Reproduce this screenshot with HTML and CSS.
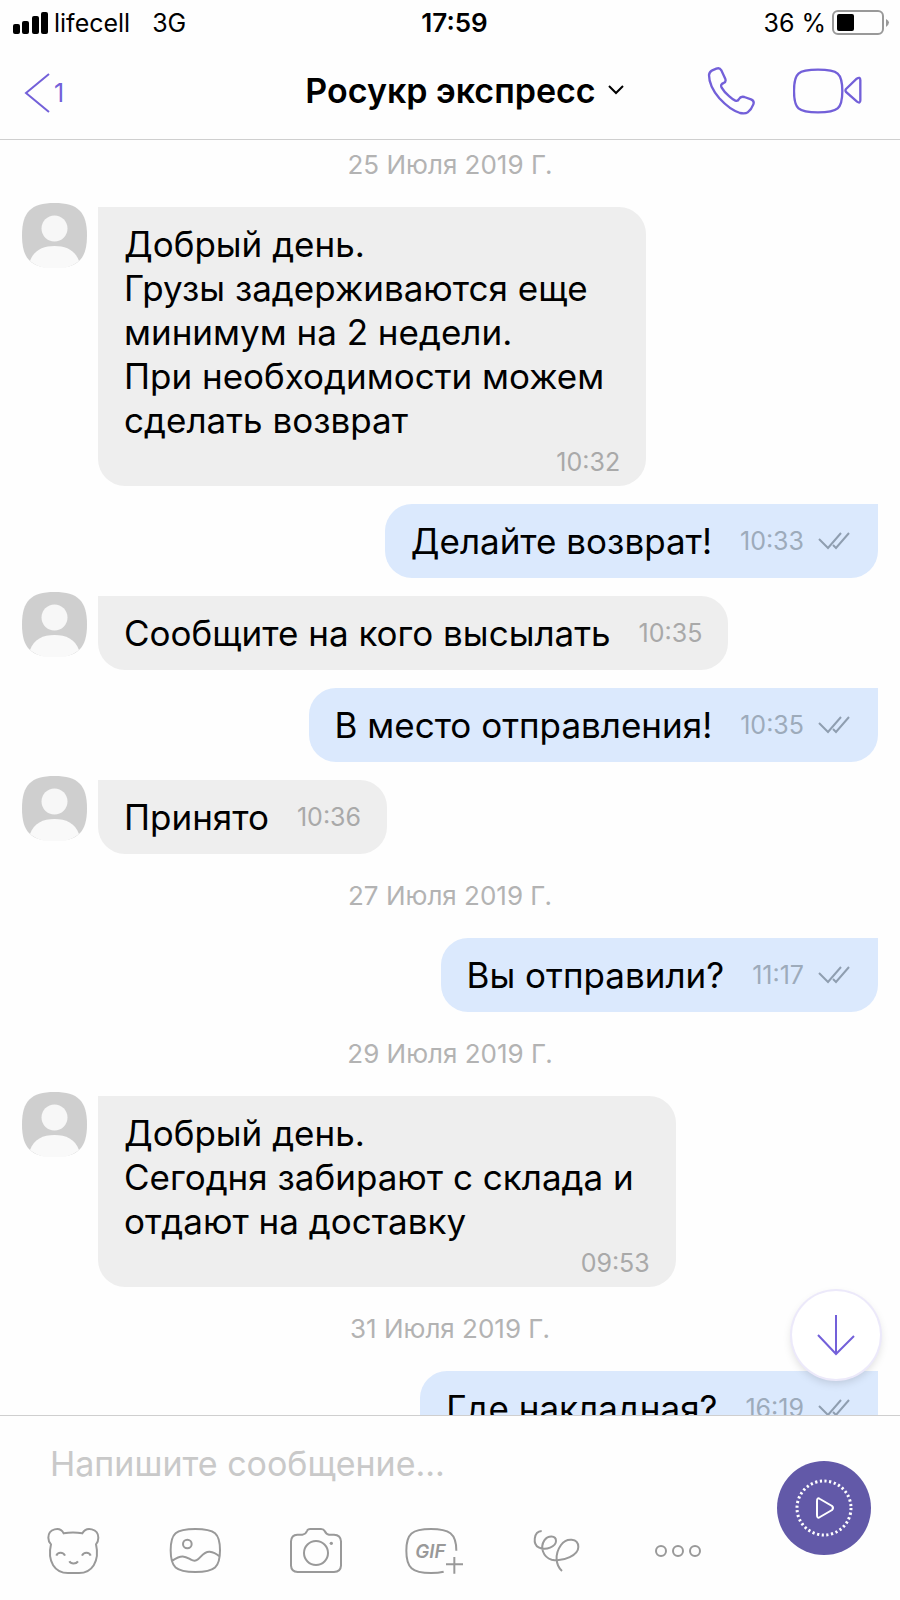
FILE: index.html
```html
<!DOCTYPE html>
<html lang="ru">
<head>
    <meta charset="UTF-8">
    <meta name="viewport" content="width=device-width, initial-scale=1.0">
    <title>Росукр экспресс</title>
    <link rel="stylesheet" href="styles.css">
</head>
<body>
    <svg class="sprite" aria-hidden="true">
        <symbol id="avatar" viewBox="0 0 65 65">
            <path d="M32.500 0C56 0 65 9 65 32.500S56 65 32.500 65 0 56 0 32.500 9 0 32.500 0Z" fill="#cfcfcf"/>
            <circle cx="32.500" cy="25.500" r="13" fill="#f7f7f7"/>
            <path d="M8 58C12 47 21 43 32.500 43S53 47 57 58C51 63 43 66 32.500 66S14 63 8 58Z" fill="#f9f9f9"/>
        </symbol>
        <symbol id="ticks" viewBox="0 0 32 18">
            <path d="M1 7L10 16 23 1M15 13L18 16 31 1" fill="none" stroke="currentColor" stroke-width="2"/>
        </symbol>
    </svg>

    <div class="status">
        <div class="status-left">
            <svg width="35" height="22" viewBox="0 0 35 22"><rect y="12" width="7" height="10" rx="2"/><rect x="9" y="9" width="7" height="13" rx="2"/><rect x="19" y="4" width="7" height="18" rx="2"/><rect x="28" width="7" height="22" rx="2"/></svg>
            <span>lifecell</span>
            <span class="network">3G</span>
        </div>
        <time class="clock">17:59</time>
        <div class="status-right">
            <span>36 %</span>
            <svg width="58" height="26" viewBox="0 0 58 26"><rect x="1" y="1" width="50" height="23" rx="5" fill="none" stroke="#999" stroke-width="2"/><rect x="5" y="4" width="17" height="17" rx="2"/><path d="M54 9Q60 12 54 17Z" fill="#999"/></svg>
        </div>
    </div>

    <header class="header">
        <button class="back" aria-label="Назад"><svg width="26" height="42" viewBox="0 0 26 42"><path d="M25 2L2 21 25 40" fill="none" stroke="currentColor" stroke-width="2"/></svg><span>1</span></button>
        <button class="title">Росукр экспресс<svg width="16" height="10" viewBox="0 0 16 10"><path d="M1 1L8 8 15 1" fill="none" stroke="#000" stroke-width="2"/></svg></button>
        <div class="calls">
            <button aria-label="Позвонить"><svg width="50" height="50" viewBox="773 194 150 150"><path d="M779 224Q780 215 789 210L801 205Q811 201 816 210L828 236Q831 245 823 248 812 251 817 262 824 275 840 288 850 297 858 301 866 303 869 296 874 287 885 290L905 297Q916 302 912 312 906 328 895 336 888 341 872 338 842 329 810 294 779 257 779 224Z"/></svg></button>
            <button aria-label="Видеозвонок"><svg width="70" height="50" viewBox="1031 194 210 150"><path d="M1106 208C1166 208 1179 218 1179 272S1166 336 1106 336 1034 326 1034 272 1046 208 1106 208ZM1190 266L1222 235Q1233 228 1233 240V300Q1233 311 1223 304L1190 275Q1187 270 1190 266Z"/></svg></button>
        </div>
    </header>

    <main class="chat">
        <div class="messages">
            <p class="date">25 Июля 2019 Г.</p>
            <div class="row">
                <svg class="avatar"><use href="#avatar"/></svg>
                <div class="bubble long">
                    <p>Добрый день.<br>Грузы задерживаются еще<br>минимум на 2 недели.<br>При необходимости можем<br>сделать возврат</p>
                    <time>10:32</time>
                </div>
            </div>
            <div class="row out">
                <div class="bubble"><p>Делайте возврат!</p><time>10:33</time><svg class="ticks"><use href="#ticks"/></svg></div>
            </div>
            <div class="row">
                <svg class="avatar"><use href="#avatar"/></svg>
                <div class="bubble"><p>Сообщите на кого высылать</p><time>10:35</time></div>
            </div>
            <div class="row out">
                <div class="bubble"><p>В место отправления!</p><time>10:35</time><svg class="ticks"><use href="#ticks"/></svg></div>
            </div>
            <div class="row">
                <svg class="avatar"><use href="#avatar"/></svg>
                <div class="bubble"><p>Принято</p><time>10:36</time></div>
            </div>
            <p class="date">27 Июля 2019 Г.</p>
            <div class="row out">
                <div class="bubble"><p>Вы отправили?</p><time>11:17</time><svg class="ticks"><use href="#ticks"/></svg></div>
            </div>
            <p class="date">29 Июля 2019 Г.</p>
            <div class="row">
                <svg class="avatar"><use href="#avatar"/></svg>
                <div class="bubble long">
                    <p>Добрый день.<br>Сегодня забирают с склада и<br>отдают на доставку</p>
                    <time>09:53</time>
                </div>
            </div>
            <p class="date">31 Июля 2019 Г.</p>
            <div class="row out">
                <div class="bubble"><p>Где накладная?</p><time>16:19</time><svg class="ticks"><use href="#ticks"/></svg></div>
            </div>
        </div>
        <button class="scroll-down" aria-label="Вниз"><svg width="40" height="44" viewBox="0 0 40 44"><path d="M20 2V41M2 22L20 41 38 23" fill="none" stroke="currentColor" stroke-width="2"/></svg></button>
    </main>

    <footer class="composer">
        <div class="composer-main">
            <input type="text" placeholder="Напишите сообщение..." aria-label="Сообщение">
            <div class="tools">
                <button aria-label="Стикеры"><svg viewBox="130 378 180 150"><path d="M192 400Q220 395 248 400C260 378 296 386 296 413Q296 425 289 433C301 485 276 519 238 519H205C166 519 142 485 154 433Q146 425 146 413C146 386 181 378 192 400ZM170 467C174 455 191 455 196 467M247 467C252 455 269 455 273 467M209 484C214 493 229 493 235 484"/></svg></button>
                <button aria-label="Галерея"><svg viewBox="493 378 180 150"><path d="M587 387C646 387 661 400 661 451S646 516 587 516 513 502 513 451 528 387 587 387ZM518 482C548 461 558 470 574 479 600 493 603 453 630 455Q645 456 659 469"/><circle cx="563" cy="432" r="13"/></svg></button>
                <button aria-label="Камера"><svg viewBox="855 378 180 150"><path d="M892 404H907Q917 403 921 393 923 387 931 387H963Q971 387 974 393 979 403 987 404H1002Q1022 405 1023 424V497Q1022 515 1002 516H893Q874 515 873 497V424Q874 405 892 404Z"/><circle cx="948" cy="459" r="36"/><circle class="solid" cx="994" cy="430" r="5"/></svg></button>
                <button aria-label="GIF"><svg viewBox="1217 378 180 150"><path d="M1330 515Q1314 519 1292 519C1235 519 1218 503 1218 452S1235 387 1292 387C1346 387 1368 400 1368 452M1362 471V521M1337 493H1388"/><text x="1245" y="473">GIF</text></svg></button>
                <button aria-label="Рисунок"><svg viewBox="3 33 180 150"><path d="M47 48C22 50 20 88 38 97 60 109 90 94 90 78 90 60 66 61 55 76 42 96 50 126 77 134 115 142 157 119 157 96 157 69 121 67 105 90 85 118 89 151 108 168"/></svg></button>
                <button aria-label="Ещё"><svg viewBox="593 768 180 150"><circle cx="632" cy="843" r="15"/><circle cx="683" cy="843" r="15"/><circle cx="734" cy="843" r="15"/></svg></button>
            </div>
        </div>
        <button class="record" aria-label="Видеосообщение"><svg width="94" height="94" viewBox="0 0 94 94"><circle cx="47" cy="47" r="27" stroke-width="3" stroke-dasharray="2.200 2.512"/><path d="M40 40Q40 36 43 38L55 45Q57 47 55 49L43 56Q40 58 40 54Z"/></svg></button>
    </footer>
</body>
</html>
```
FILE: styles.css
```css
* {
    box-sizing: border-box;
}
body {
    margin: 0;
    height: 100vh;
    display: flex;
    flex-direction: column;
    overflow: hidden;
    background: #fefefe;
    color: #000;
    font-family: Inter, "Liberation Sans", sans-serif;
}
p {
    margin: 0;
}
button {
    padding: 0;
    border: 0;
    background: none;
    color: #7360d9;
    font-family: inherit;
    cursor: pointer;
}
svg {
    display: block;
    flex-shrink: 0;
}
.sprite {
    position: absolute;
    width: 0;
    height: 0;
}

/* status bar */
.status {
    display: grid;
    grid-template-columns: 1fr auto 1fr;
    align-items: center;
    height: 45px;
    padding: 0 10px 0 13px;
    font-size: 25px;
}
.status-left, .status-right {
    display: flex;
    align-items: center;
    gap: 6px;
}
.status-right {
    justify-content: flex-end;
}
.network {
    margin-left: 16px;
}
.clock {
    padding-left: 6px;
    font-size: 26px;
    font-weight: 600;
}

/* header */
.header {
    display: grid;
    grid-template-columns: 1fr auto 1fr;
    align-items: center;
    height: 95px;
    padding: 0 37px 4px 24px;
    border-bottom: 1px solid #cfcfcf;
}
.back {
    display: flex;
    align-items: center;
    gap: 4px;
    padding-top: 6px;
    font-size: 25px;
}
.title {
    display: flex;
    align-items: center;
    gap: 12px;
    padding-left: 42px;
    color: #000;
    font-size: 34px;
    font-weight: 600;
}
.calls {
    display: flex;
    justify-content: flex-end;
    gap: 36px;
}
.calls svg {
    fill: none;
    stroke: currentColor;
    stroke-width: 7;
}

/* messages */
.chat {
    position: relative;
    flex: 1;
    min-height: 0;
    overflow: hidden;
}
.messages {
    display: flex;
    flex-direction: column;
    gap: 18px;
    padding: 1px 22px;
}
.date {
    color: #b3b3b3;
    font-size: 26px;
    line-height: 48px;
    text-align: center;
}
.row {
    display: flex;
    align-items: flex-start;
    gap: 11px;
}
.out {
    justify-content: flex-end;
}
.avatar {
    width: 65px;
    height: 65px;
    margin-top: -4px;
}
.bubble {
    display: flex;
    align-items: center;
    gap: 28px;
    padding: 15px 26px;
    border-radius: 0 27px 27px 27px;
    background: #eee;
    font-size: 35px;
    line-height: 44px;
}
.bubble time {
    color: #a9a9a9;
    font-size: 25px;
}
.out .bubble {
    padding-right: 28px;
    border-radius: 27px 0 27px 27px;
    background: #dbe9fd;
}
.out time {
    color: #9dabbb;
}
.long {
    display: block;
    padding-bottom: 4px;
}
.long p {
    padding-right: 16px;
}
.long time {
    display: block;
    line-height: 40px;
    text-align: right;
}
.ticks {
    width: 32px;
    height: 18px;
    margin-left: -14px;
    color: #8f9eb0;
}
.scroll-down {
    position: absolute;
    right: 20px;
    bottom: 36px;
    display: flex;
    align-items: center;
    justify-content: center;
    width: 88px;
    height: 88px;
    border-radius: 50%;
    background: #fff;
    box-shadow: 0 0 0 2px #ece9fa, 0 4px 10px rgba(0, 0, 0, 0.15);
}

/* composer */
.composer {
    display: flex;
    gap: 38px;
    height: 185px;
    padding: 0 29px 0 12px;
    border-top: 1px solid #cfcfcf;
}
.composer-main {
    flex: 1;
    min-width: 0;
}
.composer input {
    width: 100%;
    height: 94px;
    padding: 0 38px;
    border: 0;
    outline: 0;
    background: none;
    font-family: inherit;
    font-size: 34px;
}
.composer input::placeholder {
    color: #c9c9c9;
    opacity: 1;
}
.tools {
    display: grid;
    grid-template-columns: repeat(6, 1fr);
    justify-items: center;
    padding-top: 16px;
}
.tools svg {
    width: 60px;
    height: 50px;
    overflow: visible;
    fill: none;
    stroke: #999;
    stroke-width: 6;
}
.tools .solid {
    fill: #999;
    stroke: none;
}
.tools text {
    fill: #999;
    stroke: none;
    font-size: 56px;
    font-style: italic;
    font-weight: 600;
}
.record {
    align-self: flex-start;
    margin-top: 45px;
    border-radius: 50%;
    background: #6259a8;
}
.record svg {
    fill: none;
    stroke: #fff;
    stroke-width: 2;
}
```
